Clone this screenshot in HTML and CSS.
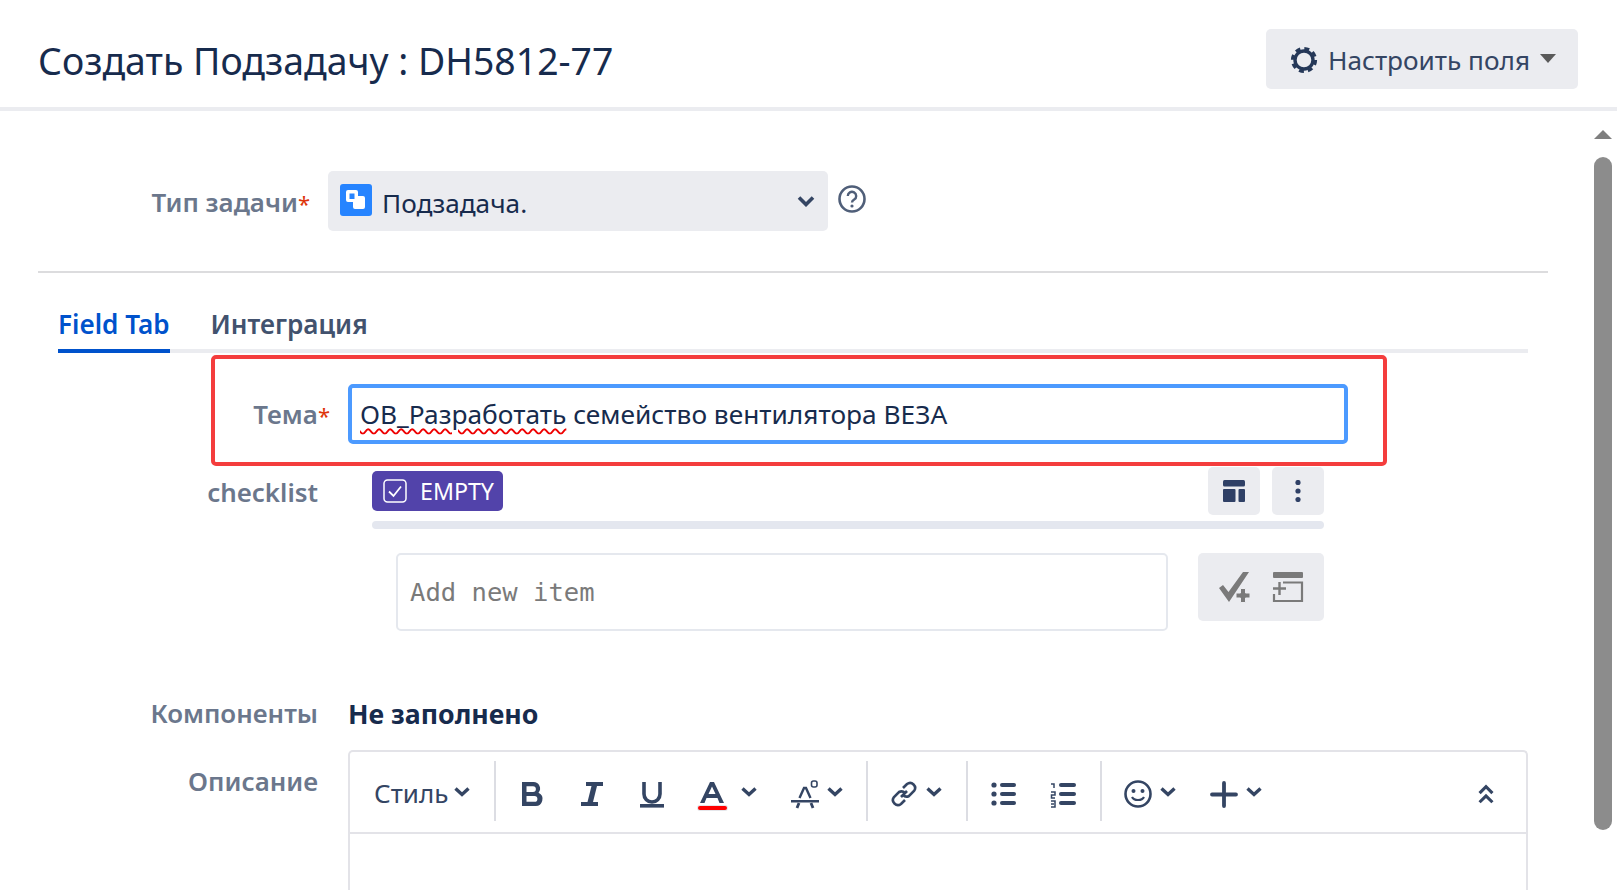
FILE: index.html
```html
<!DOCTYPE html>
<html lang="ru">
<head>
<meta charset="utf-8">
<title>Создать Подзадачу</title>
<link rel="stylesheet" href="styles.css">
</head>
<body>
<div class="dialog">
  <header class="head">
    <h1 class="title">Создать Подзадачу : DH5812-77</h1>
    <button class="cfg">
      <svg class="gear" viewBox="0 0 28 28"><circle cx="14" cy="14" r="9" fill="none" stroke="#253858" stroke-width="3.400"/><circle cx="14" cy="14" r="11.600" fill="none" stroke="#253858" stroke-width="3" stroke-dasharray="5 4.110"/></svg>
      <span>Настроить поля</span>
      <i class="caret"></i>
    </button>
  </header>
  <div class="body">
    <main class="main">
      <div class="typerow">
        <label class="lab lab-type">Тип задачи<em>*</em></label>
        <div class="select">
          <svg class="subtask" viewBox="0 0 32 32"><rect width="32" height="32" rx="3" fill="#2684ff"/><path d="M8 6h8a2 2 0 0 1 2 2v4h5a2 2 0 0 1 2 2v9a2 2 0 0 1-2 2h-8a2 2 0 0 1-2-2v-5H8a2 2 0 0 1-2-2V8a2 2 0 0 1 2-2z" fill="#fff"/><rect x="9.500" y="9.500" width="5" height="5.500" fill="#2684ff"/></svg>
          <span class="seltext">Подзадача.</span>
          <svg class="selchev" viewBox="0 0 18 12"><path d="M2 2.500l7 7 7-7" fill="none" stroke="#344563" stroke-width="3.600"/></svg>
        </div>
        <svg class="help" viewBox="0 0 28 28"><circle cx="14" cy="14" r="12.500" fill="none" stroke="#505f79" stroke-width="2.600"/><path d="M9.800 11a4.200 4.200 0 1 1 6.400 3.600c-1.500.9-2.200 1.700-2.200 3" fill="none" stroke="#505f79" stroke-width="2.400"/><circle cx="14" cy="21" r="1.600" fill="#505f79"/></svg>
      </div>
      <hr class="rule">
      <nav class="tabs">
        <a class="tab active">Field Tab</a>
        <a class="tab">Интеграция</a>
      </nav>
      <div class="marked">
        <label class="lab lab-theme">Тема<em>*</em></label>
        <div class="subject"><span class="typo">ОВ_Разработать</span> семейство вентилятора ВЕЗА</div>
      </div>
      <section class="checklist">
        <label class="lab lab-check">checklist</label>
        <div class="clbody">
          <div class="clhead">
            <span class="badge">
              <svg class="bcheck" viewBox="0 0 24 24"><rect x="1" y="1" width="22" height="22" rx="3.500" fill="none" stroke="#fff" stroke-width="1.500"/><path d="M6 12.500l4.500 4.500L18 7.500" fill="none" stroke="#fff" stroke-width="1.800"/></svg>
              EMPTY
            </span>
            <div class="clbtns">
              <button class="sq"><svg class="i22" viewBox="0 0 22 22"><rect y="0" width="22" height="6.500" rx="1.500" fill="#2f4066"/><rect y="9" width="12.500" height="13" rx="1" fill="#2f4066"/><rect x="15.500" y="9" width="6.500" height="13" rx="1" fill="#2f4066"/></svg></button>
              <button class="sq"><svg class="i22" viewBox="0 0 22 22"><circle cx="11" cy="2.500" r="2.600" fill="#2f4066"/><circle cx="11" cy="11" r="2.600" fill="#2f4066"/><circle cx="11" cy="19.500" r="2.600" fill="#2f4066"/></svg></button>
            </div>
          </div>
          <div class="progress"></div>
          <div class="addrow">
            <div class="addinput">Add new item</div>
            <button class="addbtn">
              <svg class="i31" viewBox="0 0 31 31"><path d="M0 16l4-3 5.500 7L24 0h6L10 30z" fill="#7a7a7a"/><path d="M21.500 16.500h5v4.500h4.500v5h-4.500v4.500h-5V26H17v-5h4.500z" fill="#7a7a7a" stroke="#ebecf0" stroke-width="1"/></svg>
              <svg class="i31" viewBox="0 0 31 31"><rect x="0" y="0" width="30" height="6" rx="1" fill="#7a7a7a"/><path d="M10 10.500h19v18.500H1v-7" fill="none" stroke="#7a7a7a" stroke-width="2.200"/><path d="M0 16.500h13M6.500 10v13" stroke="#7a7a7a" stroke-width="2.400"/></svg>
            </button>
          </div>
        </div>
      </section>
      <div class="comprow">
        <label class="lab">Компоненты</label>
        <strong class="compval">Не заполнено</strong>
      </div>
      <div class="descrow">
        <label class="lab lab-desc">Описание</label>
        <div class="editor">
          <div class="toolbar">
            <div class="grp g1"><span class="style">Стиль</span><svg class="chev" viewBox="0 0 16 12"><path d="M1.500 2.500L8 8.500l6.500-6" fill="none" stroke="#344563" stroke-width="3.400"/></svg></div>
            <div class="grp g2">
              <span class="cell c60"><svg class="ic" viewBox="0 0 28 28"><path d="M4 2h11.500a6.500 6.500 0 0 1 5 10.700A7 7 0 0 1 17 26H4zM8.500 6.200V12H15a2.900 2.900 0 0 0 0-5.800zM8.500 16v5.800H16.500a2.900 2.900 0 0 0 0-5.800z" fill="#344563" fill-rule="evenodd"/></svg></span>
              <span class="cell c60"><svg class="ic" viewBox="0 0 28 28"><path d="M8 2h17v4h-6l-4 16h5v4H3v-4h6.500l4-16H8z" fill="#344563"/></svg></span>
              <span class="cell c60"><svg class="ic" viewBox="0 0 28 28"><path d="M6 2v12a8 8 0 0 0 16 0V2" fill="none" stroke="#344563" stroke-width="3.600"/><rect x="2" y="24" width="24" height="3.600" fill="#344563"/></svg></span>
              <span class="cell c58 tcolor"><svg class="ic" viewBox="0 0 28 28"><path d="M2 23L12 2h4l10 21h-4.500l-2-5H8.500l-2 5zM10.500 14h7L14 6.500z" fill="#344563" fill-rule="evenodd"/></svg><i class="redbar"></i></span>
              <span class="cell c16"><svg class="chev" viewBox="0 0 16 12"><path d="M1.500 2.500L8 8.500l6.500-6" fill="none" stroke="#344563" stroke-width="3.400"/></svg></span>
              <span class="cell c30"><svg class="ad" viewBox="0 0 30 30"><path d="M8.500 18L13 8h2l4.500 10M0 21.200h28" fill="none" stroke="#344563" stroke-width="2.400"/><path d="M6 28l2-5M22 28l-2-5" stroke="#344563" stroke-width="2.800"/><rect x="20.500" y="1" width="5.500" height="6" rx="2" fill="none" stroke="#344563" stroke-width="1.600"/></svg></span>
              <span class="cell c16 m6"><svg class="chev" viewBox="0 0 16 12"><path d="M1.500 2.500L8 8.500l6.500-6" fill="none" stroke="#344563" stroke-width="3.400"/></svg></span>
            </div>
            <div class="grp g3">
              <span class="cell c44"><svg class="ic" viewBox="0 0 28 28"><path d="M11 17l6-6" stroke="#344563" stroke-width="2.600"/><path d="M13 8l4-4a5 5 0 0 1 7 7l-5 5a5 5 0 0 1-6-1" fill="none" stroke="#344563" stroke-width="2.600"/><path d="M15 20l-4 4a5 5 0 0 1-7-7l5-5a5 5 0 0 1 6 1" fill="none" stroke="#344563" stroke-width="2.600"/></svg></span>
              <span class="cell c16"><svg class="chev" viewBox="0 0 16 12"><path d="M1.500 2.500L8 8.500l6.500-6" fill="none" stroke="#344563" stroke-width="3.400"/></svg></span>
            </div>
            <div class="grp g4">
              <span class="cell c60"><svg class="ic" viewBox="0 0 28 28"><circle cx="4" cy="5" r="2.600" fill="#344563"/><circle cx="4" cy="14" r="2.600" fill="#344563"/><circle cx="4" cy="23" r="2.600" fill="#344563"/><rect x="10" y="3" width="16" height="4" rx="2" fill="#344563"/><rect x="10" y="12" width="16" height="4" rx="2" fill="#344563"/><rect x="10" y="21" width="16" height="4" rx="2" fill="#344563"/></svg></span>
              <span class="cell c60"><svg class="ic" viewBox="0 0 28 28"><path d="M1 4h3v4M1 12h4v3H1.500v3H5M1 21h4v6H1M1 24h3" fill="none" stroke="#344563" stroke-width="1.500"/><rect x="9" y="3" width="17" height="4" rx="2" fill="#344563"/><rect x="9" y="12" width="17" height="4" rx="2" fill="#344563"/><rect x="9" y="21" width="17" height="4" rx="2" fill="#344563"/></svg></span>
            </div>
            <div class="grp g5">
              <span class="cell c44"><svg class="ic" viewBox="0 0 28 28"><circle cx="14" cy="14" r="12.500" fill="none" stroke="#344563" stroke-width="2.600"/><circle cx="9.500" cy="11" r="2" fill="#344563"/><circle cx="18.500" cy="11" r="2" fill="#344563"/><path d="M8 17c2 4 10 4 12 0" fill="none" stroke="#344563" stroke-width="2.200"/></svg></span>
              <span class="cell c16"><svg class="chev" viewBox="0 0 16 12"><path d="M1.500 2.500L8 8.500l6.500-6" fill="none" stroke="#344563" stroke-width="3.400"/></svg></span>
              <span class="cell c40"><svg class="ic" viewBox="0 0 28 28"><path d="M14 3v23M2 14.500h24" stroke="#344563" stroke-width="3.800" stroke-linecap="round"/></svg></span>
              <span class="cell c16 m2"><svg class="chev" viewBox="0 0 16 12"><path d="M1.500 2.500L8 8.500l6.500-6" fill="none" stroke="#344563" stroke-width="3.400"/></svg></span>
            </div>
            <span class="collapse"><svg class="i22" viewBox="0 0 18 24"><path d="M2 11l7-7 7 7M2 21l7-7 7 7" fill="none" stroke="#344563" stroke-width="3.400"/></svg></span>
          </div>
          <div class="editarea"></div>
        </div>
      </div>
    </main>
    <aside class="scroll">
      <i class="sup"></i>
      <i class="thumb"></i>
    </aside>
  </div>
</div>
</body>
</html>
```
FILE: styles.css
```css
* { box-sizing: border-box; }
html, body { margin: 0; padding: 0; height: 100%; overflow: hidden; background: #fff; }
body { font-family: "Noto Sans", "Open Sans", sans-serif; color: #172b4d; }
button { font: inherit; border: 0; padding: 0; }
svg { display: block; flex: none; }
.dialog { width: 1617px; height: 890px; overflow: hidden; display: flex; flex-direction: column; }

.head { height: 111px; flex: none; border-bottom: 4px solid #ebecf0; display: flex; justify-content: space-between; align-items: flex-start; padding: 29px 39px 0 38px; }
.title { margin: 0; font-size: 37.400px; font-weight: 400; line-height: 64px; color: #172b4d; }
.cfg { width: 312px; height: 60px; background: #ebecf0; border-radius: 5px; display: flex; align-items: center; padding: 2px 0 0 24px; font-size: 26.200px; color: #344563; }
.gear { width: 28px; height: 28px; margin-right: 10px; }
.caret { width: 0; height: 0; border: 8px solid transparent; border-top: 9px solid #5a5a5a; border-bottom: 0; margin-left: 10px; margin-top: -4px; }

.body { flex: 1; display: flex; min-height: 0; }
.main { width: 1594px; flex: none; padding-left: 38px; }
.lab { display: block; width: 280px; text-align: right; font-size: 25.900px; font-weight: 600; color: #6b778c; flex: none; }
.lab em { font-style: normal; color: #de350b; font-weight: 400; font-size: 22px; }

.typerow { display: flex; align-items: center; margin-top: 60px; height: 60px; }
.lab-type { width: 272px; margin-top: 2px; }
.select { width: 500px; height: 60px; margin-left: 18px; background: #ebecf0; border-radius: 5px; display: flex; align-items: center; padding-left: 12px; }
.subtask { width: 32px; height: 32px; margin-top: -2px; }
.seltext { font-size: 26.200px; margin-left: 10px; margin-top: 4px; color: #172b4d; flex: 1; }
.selchev { width: 18px; height: 12px; margin-right: 13px; margin-top: 0; }
.help { width: 28px; height: 28px; margin-left: 10px; margin-top: -4px; }

.rule { width: 1510px; height: 2px; background: #dcdcde; border: 0; margin: 40px 0 0; }

.tabs { margin: 0 0 0 20px; width: 1470px; height: 80px; border-bottom: 4px solid #ebecf0; display: flex; gap: 41px; padding-top: 28px; }
.tab { font-size: 26.100px; line-height: 46px; height: 52px; font-weight: 600; color: #42526e; }
.tab.active { color: #0052cc; border-bottom: 4px solid #0052cc; }

.marked { margin: 2px 0 0 173px; width: 1176px; height: 111px; border: 4px solid #f43d3d; border-radius: 5px; display: flex; align-items: center; }
.lab-theme { width: 115px; margin-top: 6px; text-align: right; }
.subject { margin: 6px 0 0 18px; width: 1000px; height: 60px; border: 4px solid #4c9aff; border-radius: 5px; display: flex; align-items: center; padding-left: 8px; font-size: 26.300px; white-space: pre; color: #172b4d; }
.typo { text-decoration: underline wavy #e00; text-decoration-thickness: 2px; text-underline-offset: 4px; }

.checklist { display: flex; margin-top: 1px; }
.lab-check { line-height: 50px; height: 48px; }
.clbody { margin-left: 54px; width: 952px; }
.clhead { height: 48px; display: flex; align-items: center; justify-content: space-between; }
.badge { width: 131px; height: 40px; border-radius: 5px; background: #5243aa; color: #fff; font-size: 23.200px; display: flex; align-items: center; gap: 13px; padding-left: 11px; }
.bcheck { width: 24px; height: 24px; }
.clbtns { display: flex; gap: 12px; }
.sq { width: 52px; height: 48px; background: #ebecf0; border-radius: 5px; display: flex; align-items: center; justify-content: center; }
.i22 { width: 22px; height: 22px; }
.progress { height: 8px; margin-top: 6px; background: #e4e7ef; border-radius: 4px; }
.addrow { margin: 24px 0 0 24px; display: flex; align-items: flex-start; gap: 30px; }
.addinput { width: 772px; height: 78px; border: 2px solid #e5e8ee; border-radius: 5px; display: flex; align-items: center; padding-left: 12px; font-family: "DejaVu Sans Mono", monospace; font-size: 25.550px; color: #7a7a7a; }
.addbtn { width: 126px; height: 68px; background: #ebecf0; border-radius: 5px; display: flex; align-items: center; padding-left: 21px; gap: 23px; }
.i31 { width: 31px; height: 31px; overflow: visible; }

.comprow { display: flex; align-items: center; height: 40px; margin-top: 62px; }
.compval { margin-left: 30px; font-size: 26.700px; font-weight: 700; color: #172b4d; }

.descrow { display: flex; margin-top: 17px; }
.lab-desc { margin-top: 13px; }
.editor { margin-left: 30px; width: 1180px; height: 200px; border: 2px solid #e3e3e8; border-bottom: 0; border-radius: 5px 5px 0 0; }
.toolbar { height: 82px; border-bottom: 2px solid #e3e3e8; display: flex; align-items: center; position: relative; }
.grp { height: 60px; border-right: 2px solid #dcdde3; display: flex; align-items: center; margin-top: -2px; }
.cell { display: flex; align-items: center; justify-content: center; height: 30px; flex: none; }
.g1 { width: 146px; padding-left: 24px; }
.style { font-size: 26px; color: #344563; width: 80px; margin-top: 4px; }
.chev { width: 16px; height: 12px; margin-top: 1px; }
.ic { width: 28px; height: 28px; margin-top: 6px; }
.ad { width: 30px; height: 30px; margin-top: 8px; }
.g2 { width: 372px; padding-left: 6px; }
.g3 { width: 100px; padding-left: 14px; }
.g4 { width: 134px; padding-left: 6px; }
.g5 { border-right: 0; padding-left: 14px; }
.c60 { width: 60px; }
.c58 { width: 58px; margin-left: 1px; }
.c30 { width: 30px; margin-left: 34px; }
.c16 { width: 16px; }
.c44 { width: 44px; }
.c40 { width: 40px; margin-left: 28px; }
.m6 { margin-left: 6px; }
.m2 { margin-left: 2px; }
.tcolor { position: relative; }
.redbar { position: absolute; left: 15px; bottom: -4px; width: 29px; height: 4px; border-radius: 2px; background: #f00; box-shadow: 0 0 0 1px #e5e6ea; }
.collapse { position: absolute; left: 1125px; top: 31px; }
.editarea { height: 100px; }

.scroll { flex: 1; padding-top: 19px; display: flex; flex-direction: column; align-items: flex-start; }
.sup { width: 0; height: 0; border: 9px solid transparent; border-bottom: 9px solid #7f7f7f; border-top: 0; }
.thumb { width: 18px; height: 673px; margin-top: 18px; background: #8c8c8c; border-radius: 9px; }
```
